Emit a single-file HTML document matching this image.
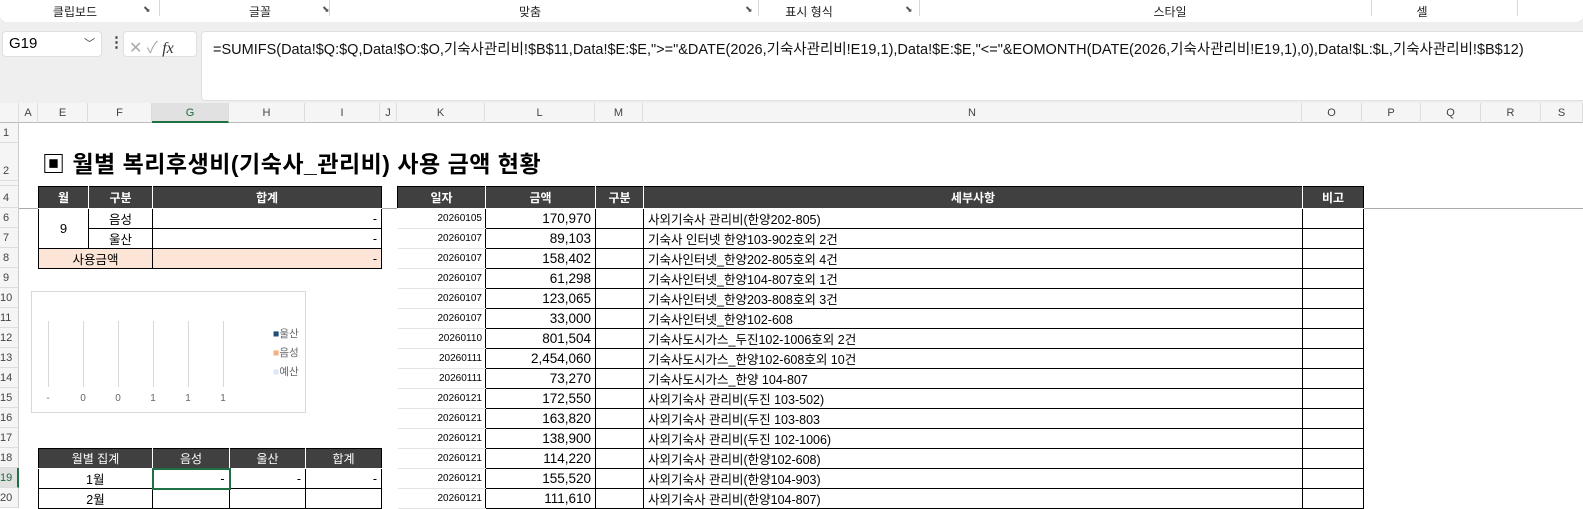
<!DOCTYPE html>
<html><head><meta charset="utf-8"><style>
*{box-sizing:border-box;margin:0;padding:0}
body{width:1583px;height:500px;overflow:hidden;background:#fff;font-family:"Liberation Sans","Noto Sans CJK KR",sans-serif;position:relative;font-size:12px;color:#000}
.a{position:absolute}
.rib{left:0;top:0;width:1583px;height:22px;background:#fff;border-radius:0 0 6px 6px;box-shadow:0 1px 2px #ccc}
.rl{top:3px;font-size:12px;color:#222;text-align:center}
.sep{top:0;width:1px;height:16px;background:#d8d8d8}
.grey{left:0;top:22px;width:1583px;height:81px;background:#efefef}
.box{background:#fff;border:1px solid #e0e0e0;border-radius:4px}
.ch{top:103px;height:20px;background:#f5f5f5;border-bottom:1px solid #bbb;font-size:11px;color:#444;text-align:center;line-height:20px;border-right:1px solid #ddd}
.rh{left:0;width:19px;background:#f5f5f5;border-right:1px solid #ccc;border-bottom:1px solid #ddd;font-size:11px;color:#444;padding-left:3px}
table{border-collapse:collapse;position:absolute;table-layout:fixed}
td{border:1px solid #000;height:20px;font-size:12.5px;padding:0 4px;white-space:nowrap;overflow:hidden}
th{background:#404040;color:#fff;font-weight:bold;border:1px solid #fff;border-top:1px solid #000;height:22px;font-size:12px}
th:first-child{border-left:1px solid #000}th:last-child{border-right:1px solid #000}
.r{text-align:right}.c{text-align:center}
.k{border:none;border-bottom:1px solid #e4e4e4;font-size:10px;text-align:right;padding-right:3px}
.n{font-size:13.5px;text-align:right}
.tl{top:321px;width:1px;height:66px;background:#d9d9d9}
.tk{top:393px;font-size:10px;color:#666;width:20px;text-align:center}
</style></head><body>
<div class="a rib"></div>
<div class="a rl" style="left:20px;width:110px">클립보드</div><div class="a rl" style="left:143px;top:4px;font-size:9px;color:#555">⬊</div>
<div class="a sep" style="left:159px"></div>
<div class="a rl" style="left:160px;width:200px">글꼴</div><div class="a rl" style="left:322px;top:4px;font-size:9px;color:#555">⬊</div>
<div class="a sep" style="left:329px"></div>
<div class="a rl" style="left:330px;width:400px">맞춤</div><div class="a rl" style="left:745px;top:4px;font-size:9px;color:#555">⬊</div>
<div class="a sep" style="left:758px"></div>
<div class="a rl" style="left:760px;width:98px">표시 형식</div><div class="a rl" style="left:905px;top:4px;font-size:9px;color:#555">⬊</div>
<div class="a sep" style="left:919px"></div>
<div class="a rl" style="left:920px;width:500px">스타일</div>
<div class="a sep" style="left:1371px"></div>
<div class="a rl" style="left:1372px;width:100px">셀</div>
<div class="a sep" style="left:1517px"></div>
<div class="a grey"></div>
<div class="a box" style="left:2px;top:31px;width:100px;height:26px;font-size:15px;padding:3px 6px">G19<span style="position:absolute;right:6px;top:3px;font-size:11px;color:#444">﹀</span></div>
<div class="a" style="left:109px;top:33px;font-size:15px;color:#444;font-weight:bold">⋮</div>
<div class="a box" style="left:123px;top:31px;width:74px;height:26px;font-size:16px;color:#aaa;padding:2px 5px">✕ ✓ <i style="color:#333;font-family:'Liberation Serif',serif">fx</i></div>
<div class="a box" style="left:201px;top:31px;width:1390px;height:70px;font-size:14.5px;padding:6px 11px;color:#111">=SUMIFS(Data!$Q:$Q,Data!$O:$O,기숙사관리비!$B$11,Data!$E:$E,"&gt;="&amp;DATE(2026,기숙사관리비!E19,1),Data!$E:$E,"&lt;="&amp;EOMONTH(DATE(2026,기숙사관리비!E19,1),0),Data!$L:$L,기숙사관리비!$B$12)</div>

<div class="a ch" style="left:0;width:19px"></div>
<div class="a ch" style="left:19px;width:19px">A</div>
<div class="a ch" style="left:38px;width:50px">E</div>
<div class="a ch" style="left:88px;width:64px">F</div>
<div class="a ch" style="left:152px;width:77px;background:#e1e1e1;color:#1d6b3a;border-bottom:2px solid #1e7145">G</div>
<div class="a ch" style="left:229px;width:76px">H</div>
<div class="a ch" style="left:305px;width:75px">I</div>
<div class="a ch" style="left:380px;width:17px">J</div>
<div class="a ch" style="left:397px;width:88px">K</div>
<div class="a ch" style="left:485px;width:110px">L</div>
<div class="a ch" style="left:595px;width:48px">M</div>
<div class="a ch" style="left:643px;width:659px">N</div>
<div class="a ch" style="left:1302px;width:60px">O</div>
<div class="a ch" style="left:1362px;width:59px">P</div>
<div class="a ch" style="left:1421px;width:60px">Q</div>
<div class="a ch" style="left:1481px;width:60px">R</div>
<div class="a ch" style="left:1541px;width:42px">S</div>

<div class="a rh" style="top:123px;height:20px;line-height:20px">1</div>
<div class="a rh" style="top:143px;height:38px;padding-top:22px">2</div>
<div class="a rh" style="top:181px;height:5px;overflow:hidden"></div>
<div class="a rh" style="top:186px;height:22px;line-height:24px">4</div>
<div class="a rh" style="top:208px;height:20px;line-height:20px">6</div>
<div class="a rh" style="top:228px;height:20px;line-height:20px">7</div>
<div class="a rh" style="top:248px;height:20px;line-height:20px">8</div>
<div class="a rh" style="top:268px;height:20px;line-height:20px">9</div>
<div class="a rh" style="top:288px;height:20px;line-height:20px;padding-left:0">10</div>
<div class="a rh" style="top:308px;height:20px;line-height:20px;padding-left:0">11</div>
<div class="a rh" style="top:328px;height:20px;line-height:20px;padding-left:0">12</div>
<div class="a rh" style="top:348px;height:20px;line-height:20px;padding-left:0">13</div>
<div class="a rh" style="top:368px;height:20px;line-height:20px;padding-left:0">14</div>
<div class="a rh" style="top:388px;height:20px;line-height:20px;padding-left:0">15</div>
<div class="a rh" style="top:408px;height:20px;line-height:20px;padding-left:0">16</div>
<div class="a rh" style="top:428px;height:20px;line-height:20px;padding-left:0">17</div>
<div class="a rh" style="top:448px;height:20px;line-height:20px;padding-left:0">18</div>
<div class="a rh" style="top:468px;height:20px;line-height:20px;padding-left:0;background:#e1e1e1;color:#1d6b3a;border-right:2px solid #1e7145">19</div>
<div class="a rh" style="top:488px;height:20px;line-height:20px;padding-left:0">20</div>
<div class="a" style="left:19px;top:208px;width:1564px;height:1px;background:#aaa"></div>

<div class="a" style="left:42px;top:145px;font-size:23px;font-weight:bold;letter-spacing:0.5px">▣ 월별 복리후생비(기숙사_관리비) 사용 금액 현황</div>

<table style="left:38px;top:186px;width:343px">
<colgroup><col style="width:50px"><col style="width:64px"><col style="width:229px"></colgroup>
<tr><th>월</th><th>구분</th><th>합계</th></tr>
<tr><td rowspan="2" class="c" style="font-size:13px">9</td><td class="c">음성</td><td class="r">-</td></tr>
<tr><td class="c">울산</td><td class="r">-</td></tr>
<tr style="background:#fce4d6"><td colspan="2" class="c">사용금액</td><td class="r">-</td></tr>
</table>

<div class="a" style="left:31px;top:291px;width:275px;height:122px;border:1px solid #d9d9d9"></div>
<div class="a tl" style="left:48px"></div>
<div class="a tl" style="left:83px"></div>
<div class="a tl" style="left:118px"></div>
<div class="a tl" style="left:153px"></div>
<div class="a tl" style="left:188px"></div>
<div class="a tl" style="left:223px"></div>
<div class="a tk" style="left:38px">-</div>
<div class="a tk" style="left:73px">0</div>
<div class="a tk" style="left:108px">0</div>
<div class="a tk" style="left:143px">1</div>
<div class="a tk" style="left:178px">1</div>
<div class="a tk" style="left:213px">1</div>
<div class="a" style="left:273px;top:325px;font-size:10.5px;color:#666;line-height:19px"><span style="color:#1f4e79">■</span>울산<br><span style="color:#f4b183">■</span>음성<br><span style="color:#dde8f4">■</span>예산</div>

<table style="left:38px;top:448px;width:343px">
<colgroup><col style="width:114px"><col style="width:77px"><col style="width:76px"><col style="width:76px"></colgroup>
<tr><th style="height:20px;font-weight:normal">월별 집계</th><th style="height:20px;font-weight:normal">음성</th><th style="height:20px;font-weight:normal">울산</th><th style="height:20px;font-weight:normal">합계</th></tr>
<tr><td class="c">1월</td><td class="r" style="border:2px solid #1e7145">-</td><td class="r">-</td><td class="r">-</td></tr>
<tr><td class="c">2월</td><td></td><td></td><td></td></tr>
</table>

<table style="left:397px;top:186px;width:966px">
<colgroup><col style="width:88px"><col style="width:110px"><col style="width:48px"><col style="width:659px"><col style="width:61px"></colgroup>
<tr><th>일자</th><th>금액</th><th>구분</th><th>세부사항</th><th>비고</th></tr>
<tr><td class="k">20260105</td><td class="n">170,970</td><td></td><td>사외기숙사 관리비(한양202-805)</td><td></td></tr>
<tr><td class="k">20260107</td><td class="n">89,103</td><td></td><td>기숙사 인터넷 한양103-902호외 2건</td><td></td></tr>
<tr><td class="k">20260107</td><td class="n">158,402</td><td></td><td>기숙사인터넷_한양202-805호외 4건</td><td></td></tr>
<tr><td class="k">20260107</td><td class="n">61,298</td><td></td><td>기숙사인터넷_한양104-807호외 1건</td><td></td></tr>
<tr><td class="k">20260107</td><td class="n">123,065</td><td></td><td>기숙사인터넷_한양203-808호외 3건</td><td></td></tr>
<tr><td class="k">20260107</td><td class="n">33,000</td><td></td><td>기숙사인터넷_한양102-608</td><td></td></tr>
<tr><td class="k">20260110</td><td class="n">801,504</td><td></td><td>기숙사도시가스_두진102-1006호외 2건</td><td></td></tr>
<tr><td class="k">20260111</td><td class="n">2,454,060</td><td></td><td>기숙사도시가스_한양102-608호외 10건</td><td></td></tr>
<tr><td class="k">20260111</td><td class="n">73,270</td><td></td><td>기숙사도시가스_한양 104-807</td><td></td></tr>
<tr><td class="k">20260121</td><td class="n">172,550</td><td></td><td>사외기숙사 관리비(두진 103-502)</td><td></td></tr>
<tr><td class="k">20260121</td><td class="n">163,820</td><td></td><td>사외기숙사 관리비(두진 103-803</td><td></td></tr>
<tr><td class="k">20260121</td><td class="n">138,900</td><td></td><td>사외기숙사 관리비(두진 102-1006)</td><td></td></tr>
<tr><td class="k">20260121</td><td class="n">114,220</td><td></td><td>사외기숙사 관리비(한양102-608)</td><td></td></tr>
<tr><td class="k">20260121</td><td class="n">155,520</td><td></td><td>사외기숙사 관리비(한양104-903)</td><td></td></tr>
<tr><td class="k">20260121</td><td class="n">111,610</td><td></td><td>사외기숙사 관리비(한양104-807)</td><td></td></tr>
</table>
</body></html>
